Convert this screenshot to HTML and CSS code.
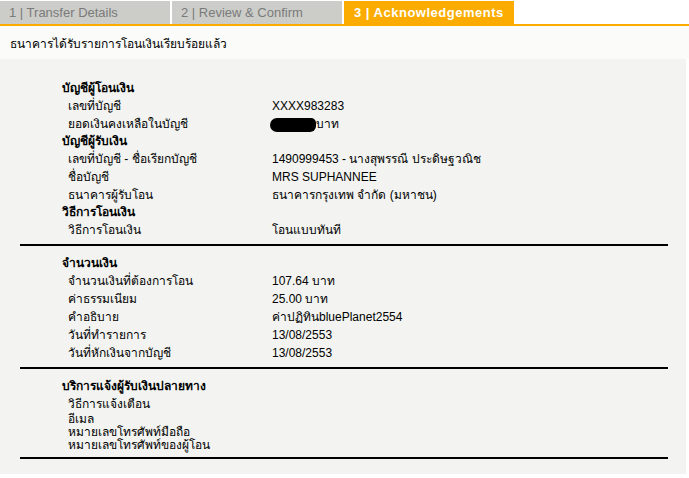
FILE: index.html
```html
<!DOCTYPE html>
<html lang="th">
<head>
  <meta charset="UTF-8" />
  <title>Acknowledgements</title>
  <link rel="stylesheet" href="styles.css">
</head>
<body>
  <div class="tabs">
    <div class="tab">1 | Transfer Details</div>
    <div class="tab">2 | Review &amp; Confirm</div>
    <div class="tab active">3 | Acknowledgements</div>
  </div>

  <div class="notice">ธนาคารได้รับรายการโอนเงินเรียบร้อยแล้ว</div>

  <div class="panel">
    <div class="block">
      <div class="heading">บัญชีผู้โอนเงิน</div>
      <div class="row"><span class="label">เลขที่บัญชี</span><span class="value">XXXX983283</span></div>
      <div class="row"><span class="label">ยอดเงินคงเหลือในบัญชี</span><span class="value"><span class="blot"></span>บาท</span></div>
      <div class="heading">บัญชีผู้รับเงิน</div>
      <div class="row"><span class="label">เลขที่บัญชี - ชื่อเรียกบัญชี</span><span class="value">1490999453 - นางสุพรรณี ประดิษฐวณิช</span></div>
      <div class="row"><span class="label">ชื่อบัญชี</span><span class="value">MRS SUPHANNEE</span></div>
      <div class="row"><span class="label">ธนาคารผู้รับโอน</span><span class="value">ธนาคารกรุงเทพ จำกัด (มหาชน)</span></div>
      <div class="heading">วิธีการโอนเงิน</div>
      <div class="row"><span class="label">วิธีการโอนเงิน</span><span class="value">โอนแบบทันที</span></div>
    </div>

    <div class="block">
      <div class="heading">จำนวนเงิน</div>
      <div class="row"><span class="label">จำนวนเงินที่ต้องการโอน</span><span class="value">107.64 บาท</span></div>
      <div class="row"><span class="label">ค่าธรรมเนียม</span><span class="value">25.00 บาท</span></div>
      <div class="row"><span class="label">คำอธิบาย</span><span class="value">ค่าปฏิทินbluePlanet2554</span></div>
      <div class="row"><span class="label">วันที่ทำรายการ</span><span class="value">13/08/2553</span></div>
      <div class="row"><span class="label">วันที่หักเงินจากบัญชี</span><span class="value">13/08/2553</span></div>
    </div>

    <div class="block">
      <div class="heading">บริการแจ้งผู้รับเงินปลายทาง</div>
      <div class="row"><span class="label">วิธีการแจ้งเตือน</span></div>
      <div class="row tight"><span class="label">อีเมล</span></div>
      <div class="row tight"><span class="label">หมายเลขโทรศัพท์มือถือ</span></div>
      <div class="row tight"><span class="label">หมายเลขโทรศัพท์ของผู้โอน</span></div>
    </div>
  </div>
</body>
</html>
```

FILE: styles.css
```css
body {
  margin: 0;
  background: #fff;
  font-family: "Liberation Sans", "DejaVu Sans", sans-serif;
  font-size: 12px;
  color: #000;
}
.tabs {
  display: flex;
  gap: 2px;
  padding-top: 1px;
  border-bottom: 2px solid #fcac00;
}
.tab {
  width: 170px;
  height: 23px;
  line-height: 23px;
  padding-left: 9px;
  box-sizing: border-box;
  background: #cccdc9;
  color: #7a7a7a;
  font-size: 13px;
  white-space: nowrap;
}
.tab.active {
  background: #fcac00;
  color: #fff;
  font-weight: bold;
  letter-spacing: 0.5px;
  padding-left: 10px;
}
.notice {
  background: #fbfcfa;
  height: 33px;
  line-height: 36px;
  padding-left: 10px;
}
.panel {
  background: #f3f4f1;
  margin-right: 3px;
  padding: 21px 18px 15px 20px;
}
.block {
  border-bottom: 2px solid #000;
  padding: 0 0 5px 42px;
  margin-bottom: 9px;
}
.block:last-child {
  margin-bottom: 0;
}
.heading {
  font-weight: bold;
  height: 17px;
  line-height: 17px;
}
.row {
  display: flex;
  height: 18px;
  line-height: 18px;
}
.row.tight {
  height: 13px;
  line-height: 13px;
}
.label {
  width: 210px;
  padding-left: 6px;
  box-sizing: border-box;
}
.blot {
  display: inline-block;
  width: 46px;
  height: 14px;
  background: #000;
  border-radius: 7px 5px 6px 7px;
  vertical-align: middle;
  margin-left: -2px;
}
```
